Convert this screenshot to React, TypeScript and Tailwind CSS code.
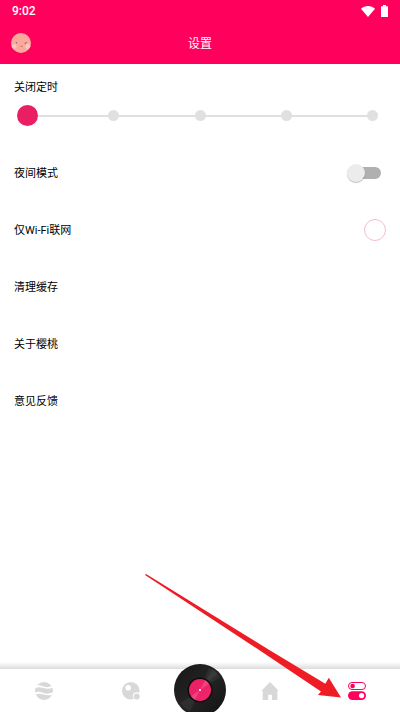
const steps = ["0", "15", "30", "45", "60"];

const links = ["清理缓存", "关于樱桃", "意见反馈"];

function StatusBar() {
  return (
    <div className="flex h-[22px] items-center justify-between px-3 text-white">
      <span className="font-[Roboto,sans-serif] text-xs font-medium">9:02</span>
      <div className="flex items-center gap-[6px]">
        <svg viewBox="0 0 14 11" className="h-[11px] w-[14px]" fill="currentColor">
          <path d="M0 2.8C4-.9 10-.9 14 2.8L7 11z" />
        </svg>
        <svg viewBox="0 0 7 12" className="h-3 w-[7px]" fill="currentColor">
          <path d="M2 0h3v1.2h1.4q.6 0 .6.6v9.6q0 .6-.6.6H.6Q0 12 0 11.4V1.8q0-.6.6-.6H2z" />
        </svg>
      </div>
    </div>
  );
}

function Avatar() {
  return (
    <svg viewBox="0 0 20 20" className="size-5">
      <clipPath id="face">
        <circle cx="10" cy="10" r="10" />
      </clipPath>
      <g clipPath="url(#face)">
        <rect width="20" height="20" fill="#fba99d" />
        <circle cx="3" cy="13.5" r="2.6" fill="#fdc5bd" />
        <circle cx="17" cy="13.5" r="2.6" fill="#fdc5bd" />
        <ellipse cx="5.3" cy="9.7" rx=".5" ry=".8" fill="#6b4038" />
        <path d="M13.8 10.6l1.8-1.2" stroke="#6b4038" strokeWidth=".9" />
        <path d="M9.3 13.3h2.6" stroke="#b5655f" strokeWidth=".7" />
      </g>
    </svg>
  );
}

function Header() {
  return (
    <header className="bg-[#ff005c]">
      <StatusBar />
      <div className="grid h-[42px] grid-cols-[1fr_auto_1fr] items-center px-[11px]">
        <button type="button" aria-label="头像" className="w-fit">
          <Avatar />
        </button>
        <h1 className="pt-[2px] text-xs text-white">设置</h1>
      </div>
    </header>
  );
}

function TimerSlider() {
  return (
    <section className="h-20 pt-4">
      <label htmlFor="timer" className="block px-[14px] leading-4">
        关闭定时
      </label>
      <div className="mt-[9px] grid items-center">
        <div className="col-start-1 row-start-1 mx-7 h-[2px] bg-[#e0e0e0]" />
        <div className="col-start-1 row-start-1 mx-[22px] flex justify-between">
          {steps.map((step) => (
            <span key={step} className="size-[11px] rounded-full bg-[#e0e0e0]" />
          ))}
        </div>
        <input
          id="timer"
          type="range"
          min="0"
          max="4"
          defaultValue="0"
          className="col-start-1 row-start-1 mx-[17px] h-[21px] appearance-none bg-transparent [&::-webkit-slider-thumb]:size-[21px] [&::-webkit-slider-thumb]:appearance-none [&::-webkit-slider-thumb]:rounded-full [&::-webkit-slider-thumb]:bg-[#e91e63]"
        />
      </div>
    </section>
  );
}

function Disc() {
  return (
    <svg viewBox="0 0 52 52" className="block size-[52px]">
      <defs>
        <linearGradient id="vinyl" x1="0" y1="0" x2="1" y2="1">
          <stop offset="0" stopColor="#161616" />
          <stop offset=".5" stopColor="#242424" />
          <stop offset="1" stopColor="#111" />
        </linearGradient>
        <linearGradient id="label" x1="0" y1="0" x2="1" y2="1">
          <stop offset="0" stopColor="#e91e63" />
          <stop offset="1" stopColor="#f0256d" />
        </linearGradient>
      </defs>
      <circle cx="26" cy="26" r="26" fill="url(#vinyl)" />
      <path d="M26 26L35 4A24 24 0 0 1 46 13z" fill="#3a3a3a" opacity=".5" />
      <path d="M26 26L38.5 5.5A24 24 0 0 1 43.5 9.5z" fill="#4a4a4a" opacity=".4" />
      <path d="M26 26L16 47.5A24 24 0 0 1 6.5 39z" fill="#3a3a3a" opacity=".5" />
      <circle cx="26" cy="26" r="12.5" fill="#0b0b0b" />
      <circle cx="26" cy="26" r="11" fill="url(#label)" />
      <path d="M26 26L31 16.2A11 11 0 0 1 35 19.7z" fill="#f25a90" opacity=".6" />
      <path d="M26 26L21 35.8A11 11 0 0 1 17 32.3z" fill="#f25a90" opacity=".6" />
      <circle cx="26" cy="26" r="1.1" fill="#fff" />
    </svg>
  );
}

function NavBar() {
  return (
    <footer>
      <div className="h-[7px] bg-linear-to-b from-transparent to-[#dcdcdc]" />
      <nav className="flex h-[43px] text-[#d8d8d8]">
        <button type="button" aria-label="发现" className="flex flex-1 items-center justify-center">
          <svg viewBox="0 0 18 18" className="size-[18px]">
            <circle cx="9" cy="9" r="9" fill="currentColor" />
            <path
              d="M0 3.6C3 2.8 5.5 3.4 8.5 4.5S14 5.2 17 3.8L18 5.6C14.5 7.2 11.5 7 8.5 6.1S3 4.6 0 6.3zM0 10.4C3 9.2 5.5 9.8 8.5 11S14.5 11.8 18 10.3L17.500 12.400C14.5 13.500 11.5 13.500 8.5 12.500S3 11.400 .3 12.400z"
              fill="#fff"
            />
          </svg>
        </button>
        <button type="button" aria-label="星球" className="flex flex-1 items-center justify-center">
          <svg viewBox="0 0 18 18" className="size-[18px]" fill="currentColor">
            <circle cx="8.8" cy="8.8" r="8.8" />
            <circle cx="6.2" cy="5.8" r="2.8" fill="#fff" />
            <circle cx="14.7" cy="14.2" r="3.9" fill="#fff" />
            <circle cx="14.7" cy="14.5" r="3" />
          </svg>
        </button>
        <button type="button" aria-label="播放" className="-mt-[5px] h-12 w-[52px] overflow-hidden">
          <Disc />
        </button>
        <button type="button" aria-label="首页" className="flex flex-1 items-center justify-center">
          <svg viewBox="0 0 18 18" className="size-[18px]" fill="currentColor">
            <path d="M9 0L17.6 8.8H16.4V18H11V12.8H7.2V18H1.7V8.8H.4z" />
          </svg>
        </button>
        <button
          type="button"
          aria-label="设置"
          className="flex flex-1 items-center justify-center text-[#ff005c]"
        >
          <svg viewBox="0 0 18 18" className="size-[18px]" fill="currentColor">
            <rect x=".5" y=".5" width="17" height="7" rx="3.5" fill="none" stroke="currentColor" />
            <circle cx="4.6" cy="4" r="2.3" />
            <rect y="9.2" width="18" height="8.8" rx="4.4" />
            <circle cx="13.6" cy="13.6" r="2.6" fill="#fff" />
          </svg>
        </button>
      </nav>
    </footer>
  );
}

export default function App() {
  return (
    <div className="relative flex min-h-screen flex-col bg-white font-[Roboto,'Noto_Sans_CJK_SC',sans-serif] text-[11px] text-black">
      <Header />

      <main className="flex-1">
        <TimerSlider />

        <div className="flex h-[57px] items-center justify-between pr-[19px] pl-[14px]">
          <label htmlFor="night" className="pt-1">
            夜间模式
          </label>
          <input
            id="night"
            type="checkbox"
            role="switch"
            className="flex h-3 w-8 appearance-none items-center rounded-full bg-[#b0b0b0] before:-ml-[2px] before:size-[18px] before:shrink-0 before:rounded-full before:bg-[#ececec] before:shadow-[0_1px_1px_rgba(0,0,0,0.25)] checked:bg-[#f8a5c0] checked:before:ml-4 checked:before:bg-[#e91e63]"
          />
        </div>

        <div className="flex h-[57px] items-center justify-between px-[14px]">
          <label htmlFor="wifi" className="pt-1">
            仅Wi-Fi联网
          </label>
          <input
            id="wifi"
            type="checkbox"
            className="size-[22px] appearance-none rounded-full border border-[#f8bbd0] checked:bg-[#e91e63]"
          />
        </div>

        {links.map((item) => (
          <a key={item} href="#" className="flex h-[57px] items-center px-[14px] pt-1">
            {item}
          </a>
        ))}
      </main>

      <NavBar />

      <svg
        viewBox="0 0 196 125"
        className="pointer-events-none absolute right-[59px] bottom-[14px] h-[125px] w-[196px]"
      >
        <path
          d="M.2 1.6Q.5 .8 1.5 1.2L123.5 76.5L180.3 110.7L183.8 104.8L196 124.6L173 122L176 118.5L114.5 77.2L.8 2.4z"
          fill="#ee1c25"
        />
      </svg>
    </div>
  );
}
